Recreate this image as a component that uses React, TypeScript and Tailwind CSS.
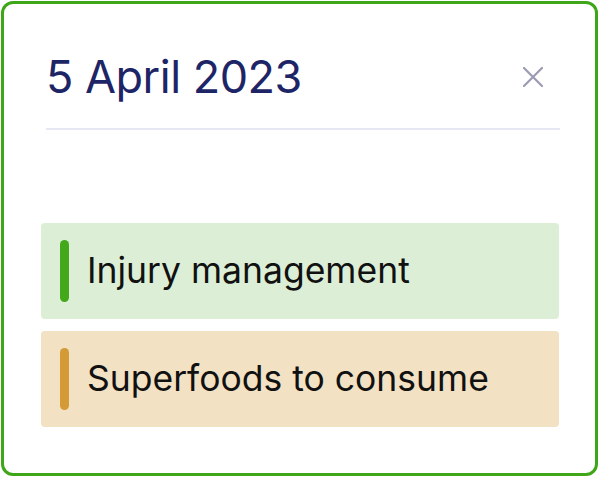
import React from 'react';

const items = [
    { label: 'Injury management', bg: 'bg-[#dcefd6]', bar: 'bg-[#43a81c]' },
    { label: 'Superfoods to consume', bg: 'bg-[#f3e1c3]', bar: 'bg-[#d49a35]' },
];

const App: React.FC = () => {
    return (
        <div className="w-[600px] h-[477px] bg-white p-px" style={{ fontFamily: 'Inter, "Noto Sans", sans-serif' }}>
            <div className="w-[597px] h-[475px] border-[3px] border-[#40a619] rounded-[12px] bg-white flex flex-col">
                {/* Header */}
                <div className="ml-[42px] mr-[35px] mt-[46px] flex items-center justify-between border-b-2 border-[#e6e8f3] pb-[24px]">
                    <h1 className="text-[45px] leading-[54px] text-[#1e2566] tracking-[-0.5px]">5 April 2023</h1>
                    <button className="mr-[17px] text-[#9a9bb2]">
                        <svg width="20" height="20" viewBox="0 0 20 20" fill="none" stroke="currentColor" strokeWidth="2.2" strokeLinecap="round">
                            <path d="M1 1 L19 19 M19 1 L1 19" />
                        </svg>
                    </button>
                </div>

                {/* Items */}
                <div className="ml-[37px] mr-[36px] mt-[93px] flex flex-col gap-[12px]">
                    {items.map((item) => (
                        <div key={item.label} className={`${item.bg} h-[96px] rounded-[4px] flex items-center pl-[19px]`}>
                            <div className={`${item.bar} w-[9px] h-[62px] rounded-full`}></div>
                            <span className="ml-[18px] text-[35.5px] text-[#111111]">{item.label}</span>
                        </div>
                    ))}
                </div>
            </div>
        </div>
    );
};

export default App;
